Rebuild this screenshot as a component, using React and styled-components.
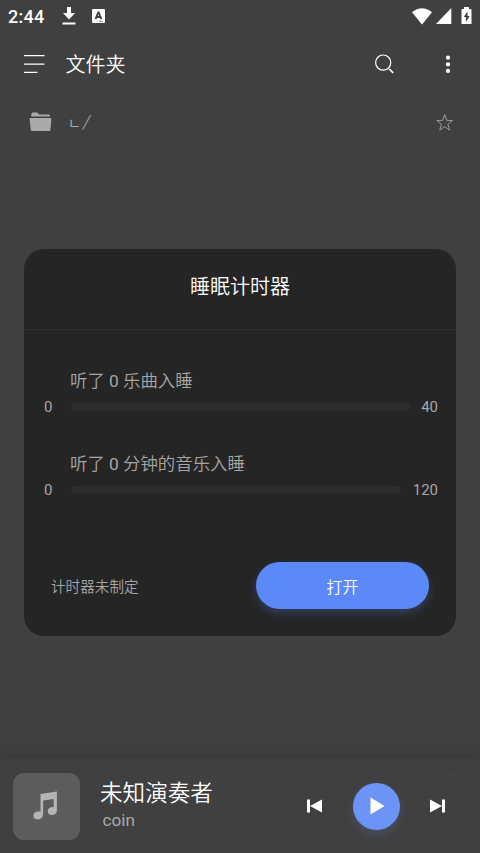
import React from "react";
import styled, { createGlobalStyle } from "styled-components";

const GlobalStyle = createGlobalStyle`
  * { box-sizing: border-box; }
  body {
    margin: 0;
    background: #404040;
    font-family: Roboto, "Noto Sans CJK SC", sans-serif;
    color: #fff;
  }
  svg { display: block; flex: none; }
`;

const Screen = styled.div`
  position: relative;
  display: flex;
  flex-direction: column;
  width: 480px;
  height: 853px;
  overflow: hidden;
  background: #404040;
`;

const StatusBar = styled.header`
  display: flex;
  align-items: center;
  height: 32px;
  padding: 0 4px 0 8px;
`;

const Clock = styled.span`
  width: 54px;
  font-size: 18px;
  font-weight: 500;
  line-height: 33px;
  letter-spacing: 0.3px;
`;

const StatusIcons = styled.div`
  display: flex;
  align-items: center;
  gap: ${(p) => p.$gap}px;
  margin-left: ${(p) => (p.$end ? "auto" : "0")};
`;

const AppBar = styled.nav`
  display: flex;
  align-items: center;
  height: 64px;
  padding: 0 20px 0 24px;
`;

const AppTitle = styled.h1`
  flex: 1;
  margin: 2px 0 0 20.4px;
  font-size: 20px;
  font-weight: 350;
  line-height: 30px;
`;

const IconButton = styled.button`
  display: grid;
  place-items: center;
  width: ${(p) => p.$size || 24}px;
  height: ${(p) => p.$size || 24}px;
  margin: 0;
  padding: 0;
  border: 0;
  background: none;
  color: inherit;
`;

const BarActions = styled.div`
  display: flex;
  gap: 40px;
`;

const PathBar = styled.div`
  display: flex;
  align-items: center;
  height: 52px;
  padding: 0 26px 0 29px;
  color: #aaa;
`;

const PathText = styled.span`
  display: flex;
  flex: 1;
  align-items: center;
  gap: 2px;
  margin-left: 16px;
  line-height: 24px;
`;

const PathCorner = styled.span`
  font-family: "Noto Sans CJK KR", sans-serif;
  font-size: 14px;
`;

const PathSlash = styled.span`
  font-family: Roboto, sans-serif;
  font-style: italic;
  font-weight: 300;
  font-size: 19px;
`;

const Overlay = styled.div`
  position: absolute;
  inset: 0;
  display: flex;
  justify-content: center;
  align-items: flex-start;
  padding-top: 249px;
  pointer-events: none;
`;

const Dialog = styled.section`
  display: flex;
  flex-direction: column;
  width: 432px;
  height: 387px;
  border-radius: 20px;
  background: #252525;
  color: #a6a6a6;
  pointer-events: auto;
`;

const DialogTitle = styled.h2`
  height: 81px;
  margin: 0;
  padding-top: 23px;
  border-bottom: 1px solid #2f2f2f;
  color: #fff;
  font-size: 20px;
  font-weight: 350;
  line-height: 30px;
  text-align: center;
`;

const DialogBody = styled.div`
  display: flex;
  flex: 1;
  flex-direction: column;
  gap: 30px;
  padding: 38px 18px 0 20px;
`;

const Setting = styled.div`
  display: flex;
  flex-direction: column;
  height: 52.5px;
`;

const SettingLabel = styled.label`
  height: 26px;
  padding-left: 26px;
  font-size: 17.4px;
  font-weight: 350;
  line-height: 26px;
`;

const Count = styled.span`
  font-weight: 400;
`;

const SliderRow = styled.div`
  display: flex;
  align-items: center;
  height: 26px;
  font-size: 15px;
`;

const Minimum = styled.span`
  width: 26.5px;
`;

const Track = styled.div`
  flex: 1;
  height: 8px;
  margin-right: 11.5px;
  border-radius: 4px;
  background: #2c2c2c;
`;

const DialogFooter = styled.footer`
  display: flex;
  align-items: center;
  justify-content: space-between;
  padding: 0 27px;
  height: 47px;
  margin-bottom: 27px;
`;

const TimerState = styled.span`
  font-size: 14.6px;
  font-weight: 350;
`;

const OpenButton = styled.button`
  width: 173px;
  height: 47px;
  padding: 0;
  border: 0;
  border-radius: 24px;
  background: #5b89f7;
  box-shadow: 0 4px 9px rgba(91, 137, 247, 0.25);
  color: #fff;
  font: inherit;
  font-size: 16px;
  font-weight: 350;
`;

const Player = styled.section`
  position: relative;
  display: flex;
  align-items: center;
  height: 94px;
  margin-top: auto;
  padding: 0 31px 0 13px;
  background: #404040;
  box-shadow: 0 -2px 16px rgba(0, 0, 0, 0.15);
`;

const Cover = styled.div`
  display: grid;
  place-items: center;
  width: 67px;
  height: 67px;
  padding-right: 3px;
  border-radius: 11px;
  background: #5c5c5c;
`;

const SongInfo = styled.div`
  flex: 1;
  margin: 0 0 1px 20px;
`;

const Artist = styled.div`
  font-size: 22.6px;
  font-weight: 350;
  line-height: 30px;
`;

const Song = styled.div`
  padding-left: 2.5px;
  color: #a9a9a9;
  font-size: 17.2px;
  line-height: 23px;
`;

const Controls = styled.div`
  display: flex;
  align-items: center;
  gap: 25.5px;
`;

const PlayButton = styled(IconButton)`
  border-radius: 50%;
  background: #6c94f7;
  box-shadow: 0 4px 9px rgba(108, 148, 247, 0.2);
`;

const ExpandHint = styled.div`
  position: absolute;
  right: 17px;
  bottom: 71px;
  color: #4a4a4a;
`;

function SliderSetting({ before, after, max }) {
  return (
    <Setting>
      <SettingLabel>
        {before} <Count>0</Count> {after}
      </SettingLabel>
      <SliderRow>
        <Minimum>0</Minimum>
        <Track />
        <span>{max}</span>
      </SliderRow>
    </Setting>
  );
}

export default function App() {
  return (
    <Screen>
      <GlobalStyle />
      <StatusBar>
        <Clock>2:44</Clock>
        <StatusIcons $gap={16}>
          <svg width="14" height="18" viewBox="0 0 14 18" fill="#fff">
            <path d="M5 0h4v6h4l-6 6.5L1 6h4zM0.5 15.5h13v2H.5z" />
          </svg>
          <svg width="13" height="14" viewBox="0 0 13 14">
            <rect width="13" height="14" rx="1" fill="#fff" />
            <path d="M3.5 10.2 6.2 3.5h.5l2.7 6.7M4.5 8h4" fill="none" stroke="#404040" strokeWidth="1.8" />
            <path d="M7 12.4h4" stroke="#888" strokeWidth="1" />
          </svg>
        </StatusIcons>
        <StatusIcons $gap={4} $end>
          <svg width="20" height="17" viewBox="0 0 20 17" fill="#fff">
            <path d="M0 4.2Q10-3.8 20 4.2L10 16.5z" />
          </svg>
          <svg width="16" height="16" viewBox="0 0 16 16" fill="#fff">
            <path d="M15.3 0v16H0z" />
          </svg>
          <svg width="20" height="18" viewBox="0 0 20 18">
            <path d="M8 1V0h5v2h1.5q1 0 1 1v14H5.5V3q0-1 1-1H8z" fill="#fff" />
            <path d="M11.5 4.5 7.7 10h2.200v5l3.800-6h-2.200z" fill="#404040" />
          </svg>
        </StatusIcons>
      </StatusBar>

      <AppBar>
        <IconButton $size={21} aria-label="menu">
          <svg width="21" height="20" viewBox="0 0 21 20" fill="#fff">
            <path d="M0 1h20.5v1.2H0zM0 9.4h20.5v1.3H0zM0 17.8h13.5V19H0z" />
          </svg>
        </IconButton>
        <AppTitle>文件夹</AppTitle>
        <BarActions>
          <IconButton aria-label="search">
            <svg width="24" height="24" viewBox="0 0 24 24" fill="none" stroke="#fff">
              <circle cx="11.2" cy="10.6" r="7.6" strokeWidth="1.2" />
              <path d="m17.2 17 4 3.8" strokeWidth="1.6" />
            </svg>
          </IconButton>
          <IconButton aria-label="more">
            <svg width="24" height="24" viewBox="0 0 24 24" fill="#fff">
              <circle cx="12" cy="5.7" r="2.1" />
              <circle cx="12" cy="12.3" r="2.1" />
              <circle cx="12" cy="18.9" r="2.1" />
            </svg>
          </IconButton>
        </BarActions>
      </AppBar>

      <PathBar>
        <svg width="23" height="20" viewBox="0 0 23 20" fill="#aaa">
          <path d="M2.3 4.6V2.2Q2.4.6 4 .6h4q1 0 2 2h10q1 0 1 2z" />
          <path d="M1.5 6h20q1 0 .9 1.1l-1 10.6q-.1 1.2-1.2 1.2H3q-1.1 0-1.2-1.2L.6 7.1Q.5 6 1.5 6z" />
        </svg>
        <PathText>
          <PathCorner>ㄴ</PathCorner>
          <PathSlash>/</PathSlash>
        </PathText>
        <svg width="22" height="22" viewBox="0 0 22 22" fill="none" stroke="#9a9a9a" strokeWidth="1">
          <path d="m12.7 3.5 2 5.900 5.900.1-4.700 3.700 1.700 5.900-4.900-3.500-4.900 3.500 1.700-5.900-4.700-3.700 5.900-.1z" />
        </svg>
      </PathBar>

      <Player>
        <Cover>
          <svg width="26" height="30" viewBox="0 0 26 30">
            <path
              d="M8.5 3.1 24.9.6V19.5q0 4-4.8 4.5-4.4 0-4.4-3.9.2-3.7 4.4-4.1l1.6.2V8L11.2 9.600V23.200q-.6 4.800-5.200 5.300-4.700-.1-4.700-3.900.3-3.800 4.500-4.200l2.700.1z"
              fill="#b4b4b4"
            />
          </svg>
        </Cover>
        <SongInfo>
          <Artist>未知演奏者</Artist>
          <Song>coin</Song>
        </SongInfo>
        <Controls>
          <IconButton $size={24} aria-label="previous">
            <svg width="24" height="24" viewBox="0 0 24 24" fill="#fff">
              <path d="M4 5.5h3v13H4zM19 5.5v13L7 12z" />
            </svg>
          </IconButton>
          <PlayButton $size={47} aria-label="play">
            <svg width="24" height="24" viewBox="0 0 24 24" fill="#fff">
              <path d="M6.5 3.5v17L20.5 12z" />
            </svg>
          </PlayButton>
          <IconButton $size={24} aria-label="next">
            <svg width="24" height="24" viewBox="0 0 24 24" fill="#fff">
              <path d="M17 5.5h3v13h-3zM5 5.5v13L17 12z" />
            </svg>
          </IconButton>
        </Controls>
        <ExpandHint>
          <svg width="18" height="10" viewBox="0 0 18 10" fill="none" stroke="currentColor">
            <path d="m1 9 8-7 8 7" />
          </svg>
        </ExpandHint>
      </Player>

      <Overlay>
        <Dialog role="dialog" aria-label="睡眠计时器">
          <DialogTitle>睡眠计时器</DialogTitle>
          <DialogBody>
            <SliderSetting before="听了" after="乐曲入睡" max={40} />
            <SliderSetting before="听了" after="分钟的音乐入睡" max={120} />
          </DialogBody>
          <DialogFooter>
            <TimerState>计时器未制定</TimerState>
            <OpenButton>打开</OpenButton>
          </DialogFooter>
        </Dialog>
      </Overlay>
    </Screen>
  );
}
